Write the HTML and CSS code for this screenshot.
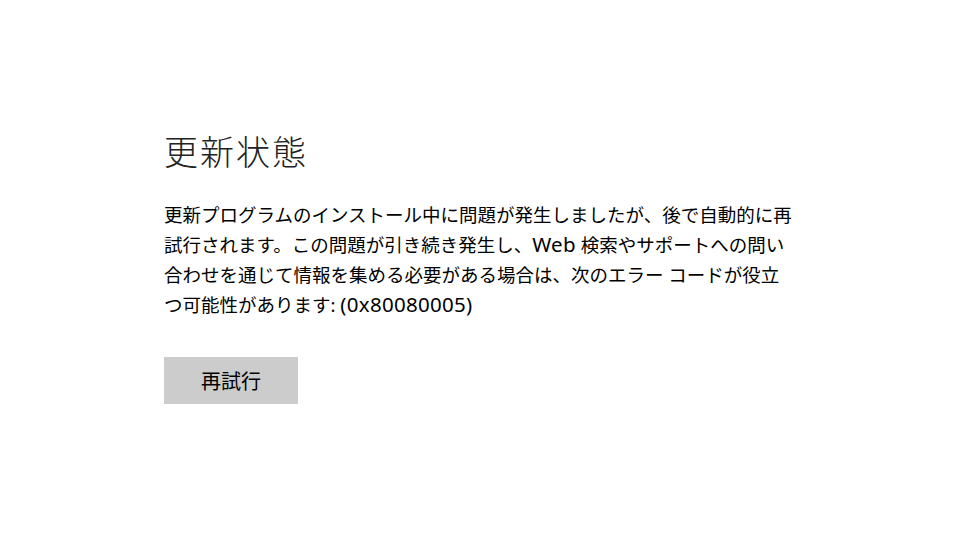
FILE: index.html
```html
<!DOCTYPE html>
<html lang="ja">

<head>
    <meta charset="UTF-8">
    <meta name="viewport" content="width=device-width, initial-scale=1.0">
    <title>更新状態</title>
    <link rel="stylesheet" href="styles.css">
</head>

<body>
    <div class="container">
        <h1>更新状態</h1>
        <p class="message">
            更新プログラムのインストール中に問題が発生しましたが、後で自動的に再<br>
            試行されます。この問題が引き続き発生し、<span class="latin">Web</span> 検索やサポートへの問い<br>
            合わせを通じて情報を集める必要がある場合は、次のエラー コードが役立<br>
            つ可能性があります: <span class="latin">(0x80080005)</span>
        </p>
        <button type="button" class="retry">再試行</button>
    </div>
</body>

</html>
```

FILE: styles.css
```css
body {
    font-family: "Noto Sans", "Noto Sans CJK JP", sans-serif;
    margin: 0;
    padding: 0;
    background-color: #fff;
    color: #000;
}

.container {
    display: flex;
    flex-direction: column;
    align-items: flex-start;
    padding: 130px 0 0 164px;
}

h1 {
    margin: 0;
    font-size: 34px;
    line-height: 44px;
    letter-spacing: 2px;
    font-weight: 300;
    color: #222;
}

.message {
    margin: 26px 0 0;
    font-size: 18.5px;
    line-height: 30px;
    white-space: nowrap;
}

.message .latin {
    font-size: 20.5px;
    line-height: 1;
    letter-spacing: 0.3px;
}

.retry {
    margin-top: 37px;
    width: 134px;
    height: 47px;
    padding: 0;
    font-family: inherit;
    font-size: 20px;
    color: #000;
    background-color: #ccc;
    border: none;
    cursor: pointer;
}

.retry:hover {
    background-color: #bbb;
}
```
